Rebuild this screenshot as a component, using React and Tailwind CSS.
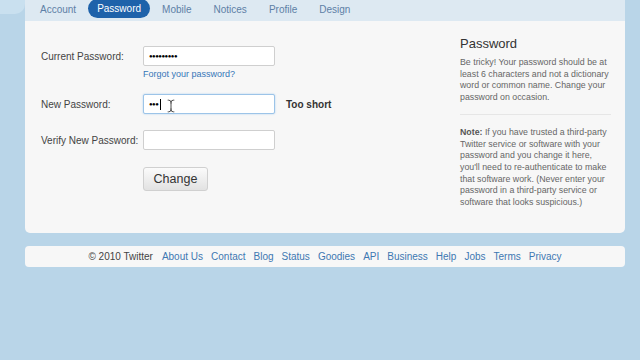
import { TextCursor } from 'lucide-react'

const tabs = ['Account', 'Password', 'Mobile', 'Notices', 'Profile', 'Design']
const links = ['About Us', 'Contact', 'Blog', 'Status', 'Goodies', 'API', 'Business', 'Help', 'Jobs', 'Terms', 'Privacy']

function Field({ label, children, extra }) {
  return (
    <div className="flex items-start">
      <div className="w-[102px] h-[20px] flex items-center text-[10px] text-[#444]">{label}</div>
      <div className="flex flex-col">{children}</div>
      {extra}
    </div>
  )
}

export default function App() {
  return (
    <div className="w-[640px] h-[360px] overflow-hidden bg-[#b9d5e8] pl-[25px] pr-[15px] relative" style={{ fontFamily: '"Liberation Sans", Arial, sans-serif' }}>
      <div className="absolute left-0 top-0 w-[25px] h-[14px] bg-[#c9e0ef] rounded-br-[10px]" />
      {/* main panel */}
      <div className="w-[600px] bg-[#f7f7f7] rounded-b-[5px]">
        <div className="h-[21px] bg-[#dde9f2] flex items-start pl-[4px]">
          {tabs.map((t) =>
            t === 'Password' ? (
              <div key={t} className="h-[19px] -mt-[1px] px-[9px] ml-[1px] mr-[1px] rounded-full bg-[#1e62aa] text-white text-[10px] flex items-center">{t}</div>
            ) : (
              <div key={t} className="h-[19px] px-[11px] text-[10px] text-[#5d80a6] flex items-center">{t}</div>
            )
          )}
        </div>
        <div className="flex h-[212px]">
          <div className="w-[419px] pl-[16px] pt-[25px] flex flex-col">
            <Field label="Current Password:">
              <div className="w-[132px] h-[20px] bg-white border border-[#cfcfcf] rounded-[2px] flex items-center pl-[5px] text-[6px] tracking-[-0.5px] text-black font-bold">●●●●●●●●●</div>
              <div className="text-[9px] text-[#3676b8] mt-[2px] leading-[12px]">Forgot your password?</div>
            </Field>
            <div className="h-[14px]" />
            <Field
              label="New Password:"
              extra={<div className="ml-[11px] h-[20px] flex items-center text-[10px] font-bold text-[#333]">Too short</div>}
            >
              <div className="relative w-[132px] h-[20px] bg-white border border-[#9cc4e8] rounded-[2px] flex items-center pl-[5px] text-[6px] tracking-[-0.5px] text-black font-bold shadow-[0_0_2px_#a9cdee]">
                ●●●<span className="ml-[2px] w-[1px] h-[11px] bg-black" />
                <TextCursor className="absolute left-[20px] top-[3px] w-[14px] h-[16px] text-[#333]" strokeWidth={1.5} />
              </div>
            </Field>
            <div className="h-[16px]" />
            <Field label="Verify New Password:">
              <div className="w-[132px] h-[20px] bg-white border border-[#cfcfcf] rounded-[2px]" />
            </Field>
            <div className="pl-[102px] mt-[17px]">
              <div className="w-[65px] h-[24px] rounded-[3px] border border-[#d0d0d0] bg-gradient-to-b from-[#fbfbfb] to-[#e2e2e2] flex items-center justify-center text-[12.5px] text-[#333]">Change</div>
            </div>
          </div>
          <div className="w-[181px] pt-[15px] pl-[16px] pr-[14px]">
            <div className="text-[13px] text-[#333] leading-[16px]">Password</div>
            <p className="mt-[5px] text-[8.8px] leading-[11.7px] text-[#666]">
              Be tricky! Your password should be at least 6 characters and not a dictionary word or common name. Change your password on occasion.
            </p>
            <div className="mt-[10px] border-t border-[#e6e6e6]" />
            <p className="mt-[12px] text-[8.8px] leading-[11.7px] text-[#666]">
              <span className="font-bold text-[#555]">Note:</span> If you have trusted a third-party Twitter service or software with your password and you change it here, you'll need to re-authenticate to make that software work. (Never enter your password in a third-party service or software that looks suspicious.)
            </p>
          </div>
        </div>
      </div>
      {/* footer */}
      <div className="mt-[13px] w-[600px] h-[21px] bg-[#f7f7f7] rounded-[4px] flex items-center justify-center gap-[8px] text-[10px]">
        <span className="text-[#444] mr-[1px]">© 2010 Twitter</span>
        {links.map((l) => (
          <span key={l} className="text-[#3e78b2]">{l}</span>
        ))}
      </div>
    </div>
  )
}
